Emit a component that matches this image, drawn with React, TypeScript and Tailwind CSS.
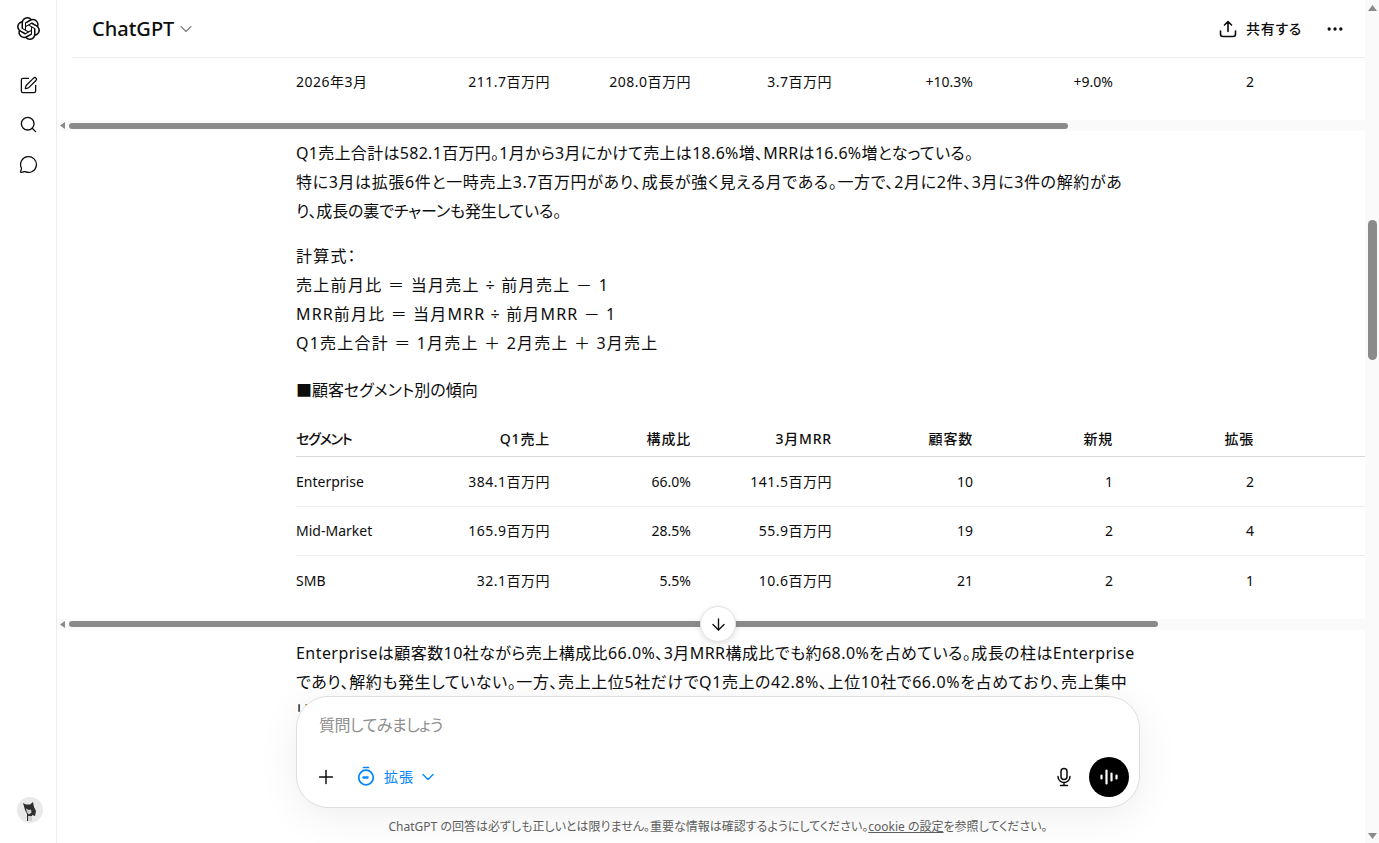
import { ChevronDown, Ellipsis, MessageCircle, Plus, Search, SquarePen, ArrowDown } from "lucide-react";
import { SiOpenai } from "react-icons/si";

const headers = ["セグメント", "Q1売上", "構成比", "3月MRR", "顧客数", "新規", "拡張"];
const segments = [
  ["Enterprise", "384.1百万円", "66.0%", "141.5百万円", "10", "1", "2"],
  ["Mid-Market", "165.9百万円", "28.5%", "55.9百万円", "19", "2", "4"],
  ["SMB", "32.1百万円", "5.5%", "10.6百万円", "21", "2", "1"],
];
const lastRow = ["2026年3月", "211.7百万円", "208.0百万円", "3.7百万円", "+10.3%", "+9.0%", "2"];

function Row({ cells, className }: { cells: string[]; className: string }) {
  return (
    <div className={"ml-[239px] grid grid-cols-[113px_141px_141px_141px_141px_140px_141px] items-center text-sm " + className}>
      {cells.map((c, i) => (
        <div key={i} className={(i === 0 ? "text-left" : "text-right") + (/[^\x00-\x7f]/.test(c) ? " tracking-[0.5px]" : "")}>
          {c}
        </div>
      ))}
    </div>
  );
}

function HeaderRow() {
  return (
    <div className="mt-[18px] ml-[239px] grid h-[35px] grid-cols-[113px_141px_141px_141px_141px_140px_141px] items-center border-b border-[#d9d9d9] text-right text-sm font-medium tracking-[0.8px]">
      {headers.map((h, i) => (
        <div key={h} className={i === 0 ? "text-left tracking-[-1.2px]" : ""}>
          {h}
        </div>
      ))}
    </div>
  );
}

function HScrollbar({ thumb, className }: { thumb: string; className: string }) {
  return (
    <div className={"flex h-[11px] items-center bg-[#fafafa] pl-[3px] " + className}>
      <svg width="5" height="7" viewBox="0 0 5 7" className="shrink-0">
        <path d="M5 0v7L0 3.5z" fill="#8a8a8a" />
      </svg>
      <div className={"ml-1 h-[6px] rounded-full bg-[#8a8a8a] " + thumb} />
    </div>
  );
}

export default function App() {
  return (
    <div className="flex h-[843px] overflow-hidden bg-white font-['Noto_Sans','Noto_Sans_CJK_JP',sans-serif] text-[#0d0d0d] [font-feature-settings:'palt']">
      {/* sidebar */}
      <aside className="flex w-[57px] shrink-0 flex-col items-center border-r border-[#ededed] pl-[1px]">
        <SiOpenai className="mt-[17px] size-[23px]" />
        <SquarePen className="mt-[36px] size-[19px]" strokeWidth={1.6} />
        <Search className="mt-[20px] size-[19px]" strokeWidth={1.7} />
        <MessageCircle className="mt-[21px] size-[19px]" strokeWidth={1.6} />
        <div className="mt-auto mb-[20px] ml-[3px] size-[26px] overflow-hidden rounded-full bg-[#e9e9e9]">
          <svg viewBox="0 0 26 26" className="size-[26px]">
            <path d="M6 6l3 1.500h4L16 5l1 5 2 4-1 5-3-1v6h-5v-7l-2-4z" fill="#2e2e2e" />
            <path d="M9 11.500l3 1.500 2-.5.500 3-2.500 2-2-2zM11 19h4v5h-4z" fill="#cfcfcf" />
          </svg>
        </div>
      </aside>

      {/* main */}
      <main className="relative flex min-w-0 flex-1 flex-col">
        <header className="ml-[15px] flex h-[58px] shrink-0 items-center justify-between border-b border-[#ededed] pr-[20px] pl-[20px]">
          <div className="flex items-center gap-[2px] pt-[1px]">
            <span className="text-[20px] font-medium">ChatGPT</span>
            <ChevronDown className="size-[20px] text-[#7d7d7d]" strokeWidth={1.3} />
          </div>
          <div className="flex items-center">
            <svg width="20" height="20" viewBox="0 0 20 20" fill="none" stroke="currentColor" strokeWidth="1.6" strokeLinecap="round" strokeLinejoin="round">
              <path d="M10 12.500V2.500M6.500 6 10 2.500 13.500 6M2.500 12v3a2.500 2.500 0 0 0 2.500 2.500h10a2.500 2.500 0 0 0 2.500-2.500v-3" />
            </svg>
            <span className="ml-[8px] text-sm font-medium tracking-[0.7px]">共有する</span>
            <Ellipsis className="ml-[23px] size-[20px]" strokeWidth={2} />
          </div>
        </header>

        <div className="min-h-0 flex-1 overflow-hidden">
          <Row cells={lastRow} className="h-[48px]" />
          <HScrollbar thumb="w-[999px]" className="mt-[14px]" />

          <div className="pl-[239px] pt-[8px] text-base leading-[28.8px]">
            <p className="whitespace-nowrap">
              <span className="tracking-[0.3px]">Q1売上合計は582.1百万円。1月から3月にかけて売上は18.6%増、MRRは16.6%増となっている。</span>
              <br />
              <span className="tracking-[0.64px]">特に3月は拡張6件と一時売上3.7百万円があり、成長が強く見える月である。一方で、2月に2件、3月に3件の解約があ</span>
              <br />
              <span className="tracking-[-0.15px]">り、成長の裏でチャーンも発生している。</span>
            </p>
            <p className="mt-[17px] whitespace-nowrap">
              <span className="tracking-[1.2px]">計算式：</span>
              <br />
              <span className="tracking-[1.3px]">売上前月比 ＝ 当月売上 ÷ 前月売上 － 1</span>
              <br />
              <span className="tracking-[1.15px]">MRR前月比 ＝ 当月MRR ÷ 前月MRR － 1</span>
              <br />
              <span className="tracking-[1.2px]">Q1売上合計 ＝ 1月売上 ＋ 2月売上 ＋ 3月売上</span>
            </p>
            <p className="mt-[18px] whitespace-nowrap">■顧客セグメント別の傾向</p>
          </div>

          <HeaderRow />
          {segments.map((s, i) => (
            <Row key={s[0]} cells={s} className={"h-[49.5px]" + (i < 2 ? " border-b border-[#ededed]" : "")} />
          ))}
          <HScrollbar thumb="w-[1089px]" className="mt-[13px]" />

          <p className="whitespace-nowrap pl-[239px] pt-[9px] text-base leading-[28.8px]">
            <span className="tracking-[0.44px]">Enterpriseは顧客数10社ながら売上構成比66.0%、3月MRR構成比でも約68.0%を占めている。成長の柱はEnterprise</span>
            <br />
            <span className="tracking-[0.58px]">であり、解約も発生していない。一方、売上上位5社だけでQ1売上の42.8%、上位10社で66.0%を占めており、売上集中</span>
            <br />
            リ
          </p>
        </div>

        {/* scroll to bottom */}
        <button className="absolute top-[606px] left-[643px] flex size-[36px] items-center justify-center rounded-full border border-[#e3e3e3] bg-white shadow-[0_2px_6px_rgba(0,0,0,0.12)]">
          <ArrowDown className="size-[19px]" strokeWidth={1.7} />
        </button>

        {/* composer */}
        <div className="absolute inset-x-0 bottom-0 pl-[239px]">
          <div className="flex h-[112px] w-[844px] flex-col rounded-[32px] border border-[#dedede] bg-white shadow-[0_8px_40px_rgba(0,0,0,0.07)]">
            <div className="pt-[16px] pl-[22px] text-base leading-[24px] tracking-[-0.5px] text-[#8f8f8f]">質問してみましょう</div>
            <div className="mt-auto mb-[10px] flex items-center pr-[10px] pl-[18px]">
              <Plus className="size-[22px]" strokeWidth={1.6} />
              <svg width="20" height="20" viewBox="0 0 20 20" fill="none" stroke="#0285ff" strokeWidth="1.7" strokeLinecap="round" className="mt-[-3px] ml-[19px]">
                <path d="M7.500 1.500h5M10 4.200a7.300 7.300 0 1 1 0 14.600 7.300 7.300 0 0 1 0-14.600z" />
                <path d="M7.500 11.500h4" strokeWidth="2.400" />
              </svg>
              <span className="ml-[8px] text-sm tracking-[1px] text-[#0285ff]">拡張</span>
              <ChevronDown className="ml-[4px] size-[20px] text-[#0285ff]" strokeWidth={1.6} />
              <svg width="20" height="20" viewBox="0 0 20 20" fill="none" stroke="currentColor" strokeWidth="1.5" strokeLinecap="round" className="mr-[15px] ml-auto">
                <rect x="7" y="1.500" width="6" height="11" rx="3" />
                <path d="M4 9.500a6 6 0 0 0 12 0M10 15.500v3M6.500 18.500h7" />
              </svg>
              <div className="flex size-[40px] items-center justify-center rounded-full bg-black">
                <svg width="18" height="18" viewBox="0 0 18 18" fill="none" stroke="white" strokeWidth="2.200" strokeLinecap="round">
                  <path d="M1.500 7.500v3M6.500 2.500v13M11.500 5.500v7M16.500 7.500v3" />
                </svg>
              </div>
            </div>
          </div>
          <div className="flex h-[35px] items-center pt-[3px]">
            <p className="w-[844px] whitespace-nowrap text-center text-xs text-[#5d5d5d]">
              ChatGPT の回答は必ずしも正しいとは限りません。重要な情報は確認するようにしてください。<span className="underline">cookie の設定</span>を参照してください。
            </p>
          </div>
        </div>
      </main>

      {/* page scrollbar */}
      <div className="flex w-[14px] shrink-0 flex-col items-center bg-[#fafafa] pt-[5px] pb-[4px]">
        <svg width="9" height="6" viewBox="0 0 9 6">
          <path d="M0 6h9L4.500 0z" fill="#8a8a8a" />
        </svg>
        <div className="mt-[209px] h-[140px] w-[9px] rounded-full bg-[#8a8a8a]" />
        <svg width="9" height="6" viewBox="0 0 9 6" className="mt-auto">
          <path d="M0 0h9L4.500 6z" fill="#8a8a8a" />
        </svg>
      </div>
    </div>
  );
}
